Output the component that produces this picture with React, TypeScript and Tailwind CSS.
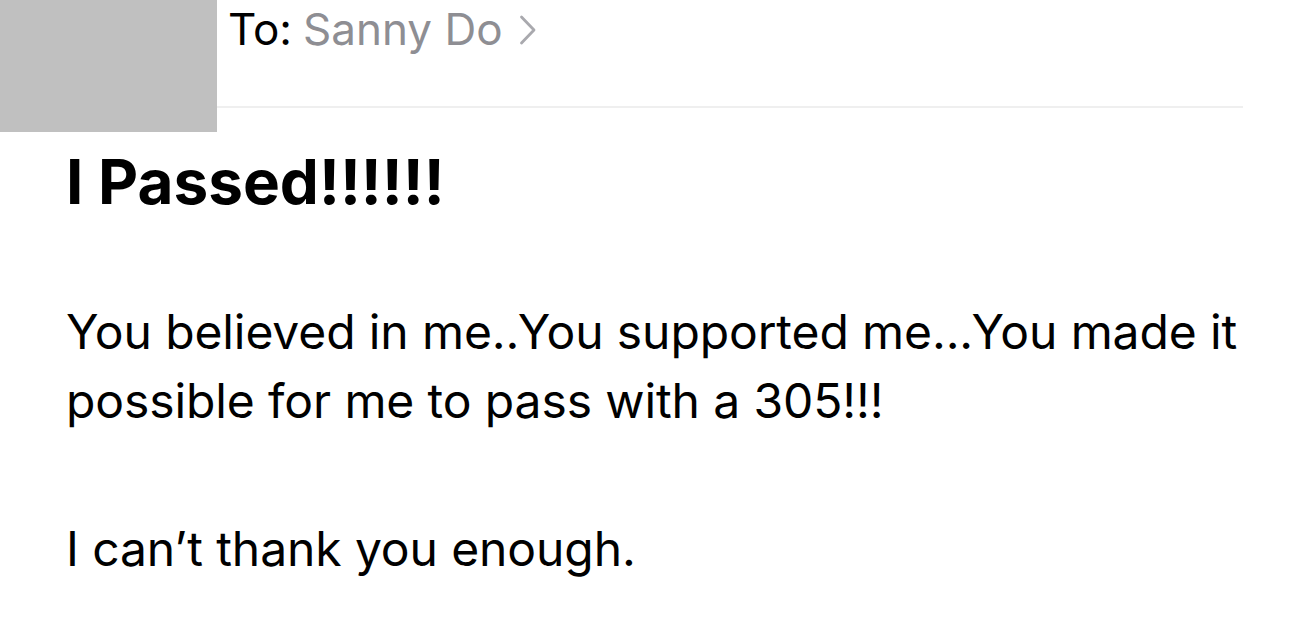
export default function App() {
  return (
    <div className="w-[1313px] h-[642px] overflow-hidden bg-white text-black font-['Inter','Roboto',sans-serif]">
      {/* Header */}
      <div className="flex">
        <div className="w-[217px] h-[132px] bg-[#c0c0c0] shrink-0" />
        <div className="flex-1 pr-[70px]">
          <div className="h-[106px] pl-[11px] pt-[3px] flex items-start text-[44px] leading-[52px]">
            <span className="text-black">To:</span>
            <span className="ml-[11px] text-[#8e8e93]">Sanny Do</span>
            <svg className="ml-[16px] mt-[11px]" width="18" height="32" viewBox="0 0 18 32" fill="none">
              <path d="M2.5 3 L15 16 L2.5 29" stroke="#a9a9ae" strokeWidth="2.8" strokeLinecap="round" strokeLinejoin="round" />
            </svg>
          </div>
          <div className="h-[2px] bg-[#efefef]" />
        </div>
      </div>

      {/* Message */}
      <div className="pl-[66px] pr-[40px]">
        <h1 className="mt-[12px] text-[62px] leading-[75px] font-bold tracking-[0px]">I Passed!!!!!!</h1>
        <p className="mt-[78px] text-[48px] leading-[69px] tracking-[-0.1px]">
          You believed in me..You supported me...You made it possible for me to pass with a 305!!!
        </p>
        <p className="mt-[79px] text-[48px] leading-[69px] tracking-[-0.1px]">I can’t thank you enough.</p>
      </div>
    </div>
  );
}
